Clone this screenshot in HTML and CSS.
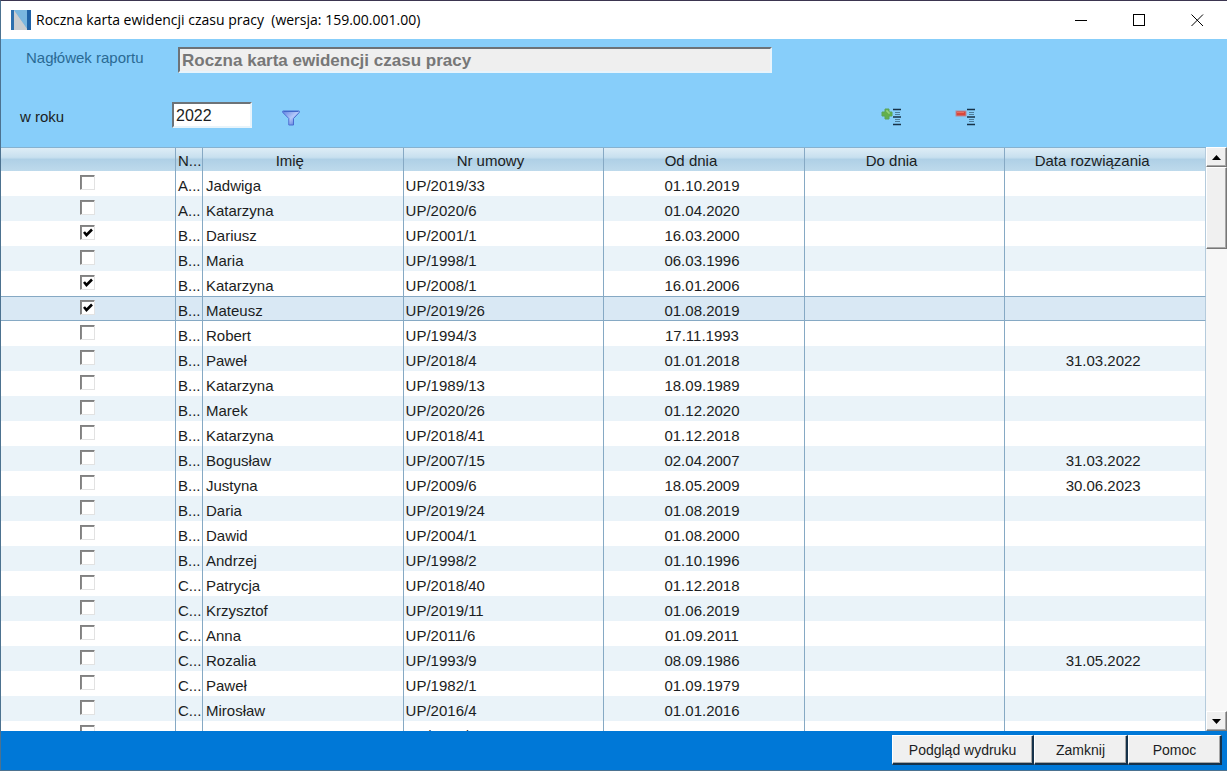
FILE: index.html
```
<!DOCTYPE html>
<html lang="pl">
<head>
<meta charset="utf-8">
<title>Roczna karta ewidencji czasu pracy</title>
<link rel="stylesheet" href="styles.css">
</head>
<body>
<div class="window">
  <header class="titlebar">
    <svg class="app-icon" viewBox="0 0 20 20" aria-hidden="true">
      <rect width="20" height="20" fill="#5a9fd2"/>
      <path d="M3 0H17V20Z" fill="#79b7e0"/>
      <path d="M3 0V20H17Z" fill="#c9cdd0"/>
      <rect width="3" height="20" fill="#2c6fae"/>
      <rect x="16" width="4" height="20" fill="#1f62a6"/>
    </svg>
    <h1 class="title">Roczna karta ewidencji czasu pracy&nbsp; (wersja: 159.00.001.00)</h1>
    <div class="window-controls">
      <button class="win-btn" type="button" aria-label="Minimalizuj"><svg width="13" height="13" viewBox="0 0 13 13" shape-rendering="crispEdges"><path d="M0 6.500H12" stroke="#000" fill="none"/></svg></button>
      <button class="win-btn" type="button" aria-label="Maksymalizuj"><svg width="13" height="13" viewBox="0 0 13 13" shape-rendering="crispEdges"><path d="M.5 .5H11.500V11.500H.5Z" stroke="#000" fill="none"/></svg></button>
      <button class="win-btn" type="button" aria-label="Zakończ"><svg width="13" height="13" viewBox="0 0 13 13"><path d="M.5 .5L12 12M12 .5L.5 12" stroke="#000" fill="none"/></svg></button>
    </div>
  </header>

  <form class="filters">
    <div class="filter-row">
      <label class="label label-muted" for="report-title">Nagłówek raportu</label>
      <input class="field field-title" id="report-title" type="text" value="Roczna karta ewidencji czasu pracy" disabled>
    </div>
    <div class="filter-row filter-row-year">
      <label class="label label-year" for="year">w roku</label>
      <input class="field field-year" id="year" type="text" value="2022">
      <button class="icon-btn icon-filter" type="button" aria-label="Filtruj">
        <svg width="18" height="16" viewBox="0 0 18 16">
          <defs><linearGradient id="funnel" x1="0" x2="1" y1="0" y2="1"><stop offset="0" stop-color="#5f80e0"/><stop offset=".5" stop-color="#b4c8fa"/><stop offset="1" stop-color="#3d62cf"/></linearGradient></defs>
          <path d="M.8 1H17.200V2.500L11.500 8.500V15H6.800V8.500L.8 2.500Z" fill="url(#funnel)" stroke="#4a6bd0"/>
          <path d="M2 1.500H16" stroke="#4267c8"/>
        </svg>
      </button>
      <div class="select-tools">
        <button class="icon-btn" type="button" aria-label="Zaznacz wszystkie">
          <svg width="20" height="18" viewBox="0 0 20 18">
            <path d="M4 1H8V4H11V8H8V11H4V8H1V4H4Z" fill="#63b04c" stroke="#5aa458"/>
            <path d="M5 3H7V5H9" stroke="#a8dc8c" fill="none"/>
            <path d="M12 1.500H20M12 9H20M12 16.500H20" stroke="#173247" stroke-width="1.500"/>
            <path d="M14 4.500H19M14 6.500H19M14 11.500H19M14 13.500H19" stroke="#4f7f9d"/>
          </svg>
        </button>
        <button class="icon-btn" type="button" aria-label="Odznacz wszystkie">
          <svg width="20" height="18" viewBox="0 0 20 18">
            <rect x="1" y="3" width="10" height="5" fill="#d8473b" stroke="#b58c9c"/>
            <path d="M2 4.500H9" stroke="#e8705f"/>
            <path d="M12 1.500H20M12 9H20M12 16.500H20" stroke="#173247" stroke-width="1.500"/>
            <path d="M14 4.500H19M14 6.500H19M14 11.500H19M14 13.500H19" stroke="#4f7f9d"/>
          </svg>
        </button>
      </div>
    </div>
  </form>

  <main class="grid-area">
    <div class="grid-scroll">
      <table class="grid">
        <colgroup><col class="col-check"><col class="col-surname"><col><col><col><col><col></colgroup>
        <thead>
          <tr><th></th><th>N...</th><th>Imię</th><th>Nr umowy</th><th>Od dnia</th><th>Do dnia</th><th>Data rozwiązania</th></tr>
        </thead>
        <tbody id="rows"></tbody>
      </table>
    </div>
    <div class="scrollbar">
      <button class="scroll-btn" type="button" aria-label="W górę"><svg width="9" height="5" viewBox="0 0 9 5"><path d="M0 5L4.500 0L9 5Z"/></svg></button>
      <div class="scroll-thumb"></div>
      <button class="scroll-btn scroll-down" type="button" aria-label="W dół"><svg width="9" height="5" viewBox="0 0 9 5"><path d="M0 0H9L4.500 5Z"/></svg></button>
    </div>
  </main>

  <footer class="actions">
    <button class="action action-wide" type="button">Podgląd wydruku</button>
    <button class="action" type="button">Zamknij</button>
    <button class="action" type="button">Pomoc</button>
  </footer>
</div>
<script src="rows.js"></script>
</body>
</html>
```
FILE: rows.js
```
const rows = [
  ["A...", "Jadwiga", "UP/2019/33", "01.10.2019"],
  ["A...", "Katarzyna", "UP/2020/6", "01.04.2020"],
  ["B...", "Dariusz", "UP/2001/1", "16.03.2000", "", true],
  ["B...", "Maria", "UP/1998/1", "06.03.1996"],
  ["B...", "Katarzyna", "UP/2008/1", "16.01.2006", "", true],
  ["B...", "Mateusz", "UP/2019/26", "01.08.2019", "", true],
  ["B...", "Robert", "UP/1994/3", "17.11.1993"],
  ["B...", "Paweł", "UP/2018/4", "01.01.2018", "31.03.2022"],
  ["B...", "Katarzyna", "UP/1989/13", "18.09.1989"],
  ["B...", "Marek", "UP/2020/26", "01.12.2020"],
  ["B...", "Katarzyna", "UP/2018/41", "01.12.2018"],
  ["B...", "Bogusław", "UP/2007/15", "02.04.2007", "31.03.2022"],
  ["B...", "Justyna", "UP/2009/6", "18.05.2009", "30.06.2023"],
  ["B...", "Daria", "UP/2019/24", "01.08.2019"],
  ["B...", "Dawid", "UP/2004/1", "01.08.2000"],
  ["B...", "Andrzej", "UP/1998/2", "01.10.1996"],
  ["C...", "Patrycja", "UP/2018/40", "01.12.2018"],
  ["C...", "Krzysztof", "UP/2019/11", "01.06.2019"],
  ["C...", "Anna", "UP/2011/6", "01.09.2011"],
  ["C...", "Rozalia", "UP/1993/9", "08.09.1986", "31.05.2022"],
  ["C...", "Paweł", "UP/1982/1", "01.09.1979"],
  ["C...", "Mirosław", "UP/2016/4", "01.01.2016"],
  ["C...", "G", "UP/2004/2", "03.07.2000"]
];
const selected = 5;

const body = document.getElementById("rows");
rows.forEach(([surname, name, contract, from, ended = "", checked = false], i) => {
  const tr = body.insertRow();
  if (i === selected) tr.className = "selected";
  const box = document.createElement("input");
  box.type = "checkbox";
  box.className = "check";
  box.checked = checked;
  box.setAttribute("aria-label", `${name} ${contract}`);
  tr.insertCell().append(box);
  [surname, name, contract, from, "", ended].forEach((text, c) => {
    const td = tr.insertCell();
    td.textContent = text;
    if (c > 2) td.className = "date";
  });
});
```
FILE: styles.css
```
* { box-sizing: border-box; }

body {
  margin: 0;
  font: 15px/18px "Liberation Sans", Arial, sans-serif;
  color: #1b1d22;
}

button, input { font: inherit; color: inherit; }

.window {
  display: flex;
  flex-direction: column;
  height: 100vh;
  border: 1px solid #4c7290;
  border-top-color: #3b3550;
  border-right: 0;
  background: #87cefa;
  overflow: hidden;
}

.titlebar {
  display: flex;
  align-items: center;
  flex: none;
  height: 38px;
  padding-left: 10px;
  background: #fff;
}
.app-icon { width: 20px; height: 20px; }
.title {
  margin: 0 0 0 5px;
  font: 14px/20px "Open Sans", "Noto Sans", sans-serif;
  color: #000;
  white-space: nowrap;
}
.window-controls { display: flex; margin-left: auto; padding-right: 1px; }
.win-btn {
  display: flex;
  align-items: center;
  justify-content: center;
  width: 58px;
  height: 38px;
  padding: 0;
  border: 0;
  background: none;
}

.filters { flex: none; height: 108px; padding-top: 8px; }
.filter-row { display: flex; height: 26px; }
.filter-row-year { align-items: center; margin-top: 29px; }
.label { width: 171px; }
.label-year { padding: 3px 0 0 19px; }
.label-muted { width: 177px; padding-left: 25px; padding-top: 2px; color: #2a6a94; }
.field {
  height: 26px;
  padding: 2px 2px 0;
  border: 2px solid;
  border-color: #6d7378 #e8f4fb #e8f4fb #6d7378;
  border-radius: 0;
  background: #fff;
}
.field-title {
  width: 594px;
  font-weight: bold;
  font-size: 17px;
  color: #777;
  background: #efefef;
}
.field-year { width: 80px; font-size: 16px; }
.icon-btn { display: flex; padding: 0; border: 0; background: none; }
.icon-filter { margin: 5px 0 0 30px; }
.select-tools { display: flex; gap: 54px; margin: 4px 252px 0 auto; }

.grid-area { display: flex; flex: 1; min-height: 0; background: #fff; }
.grid-scroll { flex: 1; overflow: hidden; border-top: 1px solid #86b2d0; }
.grid { width: 100%; table-layout: fixed; border-collapse: separate; border-spacing: 0; }
.col-check { width: 175px; }
.col-surname { width: 27px; }
.grid th {
  height: 23px;
  padding: 3px 28px 0 2px;
  border-right: 1px solid #86a9c4;
  background: linear-gradient(#deedf6 0, #c8e0ef 40%, #afd0e6 50%, #bedaec 100%);
  font-weight: normal;
  line-height: 18px;
  white-space: nowrap;
}
.grid th:last-child, .grid td:last-child { border-right-color: #b5cbdc; }
.grid td {
  height: 25px;
  padding: 5px 3px 0 2px;
  border-right: 1px solid #86a9c4;
  line-height: 20px;
  white-space: nowrap;
}
.grid td:nth-child(3) { padding-left: 3px; }
.grid th:nth-child(2), .grid td:nth-child(2) { padding-left: 2px; padding-right: 0; text-align: left; }
.grid td:first-child { padding: 0; text-align: center; vertical-align: top; }
.grid .date { padding-right: 6px; text-align: center; }
.grid tbody tr:nth-child(even) td { background: #eaf3f9; }
.grid tbody tr.selected td {
  padding-top: 4px;
  background: #d9e8f4;
  border-top: 1px solid #86a9c4;
  border-bottom: 1px solid #86a9c4;
  line-height: 19px;
}
.grid tbody tr.selected td:first-child { padding: 0; }

.check {
  display: block;
  appearance: none;
  width: 15px;
  height: 15px;
  margin: 4px 0 0 79px;
  border: 1px solid;
  border-color: #808080 #e2e2e2 #e2e2e2 #808080;
  background: #fff;
  box-shadow: inset 1px 1px #8a8a8a;
}
.selected .check { margin-top: 3px; }
.check:checked {
  background: #fff url("data:image/svg+xml,%3Csvg xmlns='http://www.w3.org/2000/svg' viewBox='0 0 13 13'%3E%3Cpath d='M3 6L5.500 9L11 3.500' fill='none' stroke='%23000' stroke-width='2.600'/%3E%3C/svg%3E") center / 13px 13px no-repeat;
}

.scrollbar { display: flex; flex-direction: column; flex: none; width: 21px; background: #f7f7f7; }
.scroll-btn, .scroll-thumb {
  flex: none;
  border: 1px solid;
  border-color: #fff #777 #777 #fff;
  background: #f0f0f0;
  box-shadow: inset -1px -1px #a8a8a8;
}
.scroll-btn { display: flex; align-items: center; justify-content: center; height: 20px; padding: 0; }
.scroll-thumb { height: 82px; }
.scroll-down { margin-top: auto; }

.actions {
  display: flex;
  justify-content: flex-end;
  flex: none;
  height: 39px;
  padding: 4px 5px 0 0;
  background: #0078d7;
}
.action {
  width: 94px;
  height: 30px;
  padding: 0;
  border: 1px solid;
  border-color: #fff #16324a #16324a #fff;
  border-right-width: 2px;
  border-bottom-width: 2px;
  border-radius: 0;
  background: #f0f0f0;
  box-shadow: inset -1px -1px #a6a6a6;
  font-size: 14px;
}
.action-wide { width: 142px; }
```
